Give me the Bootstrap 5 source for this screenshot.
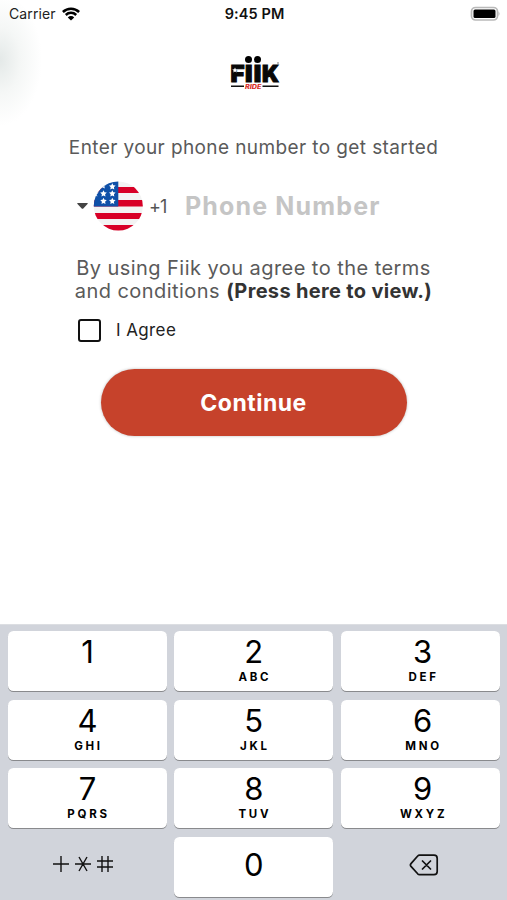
<!DOCTYPE html>
<html lang="en">
<head>
<meta charset="utf-8">
<meta name="viewport" content="width=device-width, initial-scale=1">
<title>Fiik Ride</title>
<link href="https://cdn.jsdelivr.net/npm/bootstrap@5.3.0/dist/css/bootstrap.min.css" rel="stylesheet">
<style>
html, body { height: 100%; }
body { font-family: Inter, "Liberation Sans", sans-serif; background: #fff; color: #000; overflow: hidden; }
.screen { width: 507px; height: 900px; background: radial-gradient(ellipse 42px 66px at 0 60px, #e4e9e8 0, #f5f7f6 50%, #fff 100%); }
.status { height: 27px; padding: 0 7px 0 9px; font-size: 14px; }
.status .side { flex: 1 1 0; }
.carrier { letter-spacing: .1px; color: #222; }
.wifi { margin-left: -2px; }
.clock { font-weight: 600; font-size: 14.5px; letter-spacing: .1px; color: #111; }
.brand { height: 36px; margin-top: 28px; }
.intro { margin-top: 46px; height: 22px; line-height: 22px; font-size: 19px; letter-spacing: .4px; color: #5a5a5a; white-space: nowrap; }
.phone { margin-top: 20.2px; height: 54px; padding-left: 77px; }
.dial { font-size: 18px; letter-spacing: -.8px; color: #555; width: 37px; padding-left: 5px; }
.number { padding: 2px 0 0; border: 0; font-size: 25px; letter-spacing: 1.15px; font-weight: 700; color: #555; width: 220px; background: none; box-shadow: none; }
.number::placeholder { color: #c5c5c5; opacity: 1; }
.terms { margin-top: 23.5px; font-size: 20px; line-height: 23.5px; letter-spacing: .45px; color: #5a5a5a; white-space: nowrap; }
.terms strong { color: #333; letter-spacing: .33px; }
.agree { margin-top: 15px; padding-left: 78px; height: 24px; font-size: 17px; letter-spacing: .4px; color: #222; }
.agree .form-check-input { width: 23px; height: 23px; border: 2.5px solid #111; border-radius: 3px; margin: 0 15px 0 0; }
.go { margin-top: 26.5px; width: 306px; height: 67px; font-size: 23px; letter-spacing: .5px; font-weight: 700; color: #fff; background: #c6422b; border: 0; box-shadow: 0 0 3px #bbb; }
.go.btn { padding: 2px 0 0; }
.keys { height: 276px; background: #d1d4db; padding: 6px 8px 0; display: grid; grid-template-columns: repeat(3, 159px); grid-auto-rows: 60px; gap: 8.5px 7.3px; border-top: 1px solid #dcdee2; }
.key { display: flex; flex-direction: column; align-items: center; justify-content: flex-start; background: #fff; border: 0; border-radius: 5.5px; box-shadow: 0 1px 0 #898a8d; padding: 3px 0 0; }
.key:nth-child(3n) { padding-left: 5px; }
.key b { font-weight: 400; font-size: 31px; line-height: 36px; }
.key i { font-style: normal; font-weight: 700; font-size: 11.5px; line-height: 12px; letter-spacing: 2.7px; padding: 1px 0 0 2px; }
.key.zero { padding-top: 10.5px; }
.bare { display: flex; align-items: center; justify-content: center; }
.symbols { margin: 0 9px 6px 0; }
.erase { margin: 0 0 4px 8px; }
</style>
</head>
<body>
<main class="screen d-flex flex-column">
  <header class="status d-flex align-items-center">
    <div class="side d-flex align-items-center gap-2"><span class="carrier">Carrier</span>
      <svg class="wifi" width="18" height="14" viewBox="0 0 18 14" fill="none" stroke="#000" stroke-width="2.5"><path d="M.9 5a11.5 11.5 0 0 1 16.2 0M3.8 8a7.4 7.4 0 0 1 10.4 0"/><path d="M9 13.6 5.8 10.4a4.6 4.6 0 0 1 6.4 0z" fill="#000" stroke="none"/></svg>
    </div>
    <span class="clock">9:45 PM</span>
    <div class="side d-flex justify-content-end">
      <svg width="30" height="16" viewBox="0 0 30 16"><rect x="1.5" y="1.5" width="26" height="12.5" rx="4" fill="#fff" stroke="#b9b9b9" stroke-width="1.7"/><rect x="3.5" y="3.5" width="22" height="8.5" rx="1.5" fill="#000"/><path d="M28.5 5.5q2 2.2 0 4.5z" fill="#b5b5b5"/></svg>
    </div>
  </header>

  <div class="brand d-flex justify-content-center">
    <svg width="52" height="36" viewBox="0 0 52 36" role="img" aria-label="Fiik Ride">
      <g font-family="Inter, sans-serif" font-weight="900" font-size="23" fill="#080808" stroke="#080808" stroke-width="1">
        <text x="2.5" y="27.2" textLength="14" lengthAdjust="spacingAndGlyphs">F</text><text x="17" y="27.2" textLength="7.5" lengthAdjust="spacingAndGlyphs">I</text><text x="25.7" y="27.2" textLength="7.5" lengthAdjust="spacingAndGlyphs">I</text><text x="34" y="27.2" textLength="17" lengthAdjust="spacingAndGlyphs">K</text>
      </g>
      <circle cx="20.5" cy="4.5" r="3.5"/><circle cx="29.5" cy="4.5" r="3.5"/>
      <path d="m7 12.5.8 1.7 1.9.2-1.4 1.3.4 1.9-1.7-1-1.7 1 .4-1.9-1.4-1.3 1.9-.2z" fill="#fff"/>
      <circle cx="50" cy="8" r=".8" fill="#666"/>
      <path d="M3 31.3h13M34.5 31.3h16" stroke="#111" stroke-width="1.5"/>
      <text x="17" y="33.6" font-family="Inter, sans-serif" font-size="6" font-weight="800" font-style="italic" fill="#d92b25" textLength="16.5" lengthAdjust="spacingAndGlyphs">RIDE</text>
    </svg>
  </div>

  <p class="intro text-center mb-0">Enter your phone number to get started</p>

  <div class="phone d-flex align-items-center">
    <svg width="11" height="6" viewBox="0 0 11 6"><path d="M1 0h9q1.5 0 .5 1L6.3 5.5q-.8.7-1.6 0L.5 1Q-.5 0 1 0z" fill="#444"/></svg>
    <svg class="ms-1" width="52" height="52" viewBox="0 0 52 52">
      <clipPath id="round"><circle cx="26.3" cy="26" r="24.5"/></clipPath>
      <g clip-path="url(#round)"><path fill="#f3f3f3" d="M0 0h52v52H0z"/>
      <path fill="#d80027" d="M0 7h52v6H0zM0 20h52v6.5H0zM0 33h52v6H0zM0 45h52v6H0z"/><path fill="#0f50a8" d="M0 0h26.3v26.5H0z"/>
      <g fill="#fff"><path id="star" d="m20.3 3.200 1 2.100 2.300.3-1.700 1.600.4 2.300-2-1.100-2 1.100.4-2.300L17 5.600l2.300-.3z"/><use href="#star" y="7"/><use href="#star" y="14.5"/><use href="#star" x="-8.8" y="7"/><use href="#star" x="-8.8" y="14.5"/><use href="#star" x="-9.5" y="-1"/><use href="#star" x="-17" y="7"/></g></g>
    </svg>
    <span class="dial">+1</span>
    <input class="number form-control ms-1" type="tel" placeholder="Phone Number" aria-label="Phone Number">
  </div>

  <p class="terms text-center mb-0">By using Fiik you agree to the terms<br>and conditions <strong>(Press here to view.)</strong></p>

  <label class="agree d-flex align-items-center"><input class="form-check-input" type="checkbox"><span>I Agree</span></label>

  <button class="go btn rounded-pill align-self-center" type="button">Continue</button>

  <section class="keys mt-auto" aria-label="Keypad">
    <button class="key"><b>1</b></button><button class="key"><b>2</b><i>ABC</i></button><button class="key"><b>3</b><i>DEF</i></button>
    <button class="key"><b>4</b><i>GHI</i></button><button class="key"><b>5</b><i>JKL</i></button><button class="key"><b>6</b><i>MNO</i></button>
    <button class="key"><b>7</b><i>PQRS</i></button><button class="key"><b>8</b><i>TUV</i></button><button class="key"><b>9</b><i>WXYZ</i></button>
    <div class="bare"><svg class="symbols" width="62" height="18" viewBox="0 0 62 18" fill="none" stroke="#111" stroke-width="1.4"><path d="M1 9h16M9 1v16M23 9h16M27 2l8 14M35 2l-8 14M45 6h16M45 12h16M50 1v16M56 1v16"/></svg></div>
    <button class="key zero"><b>0</b></button>
    <div class="bare"><svg class="erase" width="30" height="22" viewBox="0 0 30 22" fill="none" stroke="#111" stroke-width="1.7" stroke-linejoin="round" stroke-linecap="round"><path d="M10.500 1.200H25a3.200 3.200 0 0 1 3.200 3.200v13a3.200 3.200 0 0 1-3.200 3.200H10.500q-1 0-1.800-.8L2 12.400q-1.200-1.400 0-2.800L8.700 2q.8-.8 1.800-.8zM13.500 7l8 8M21.500 7l-8 8"/></svg></div>
  </section>
</main>
<script src="https://cdn.jsdelivr.net/npm/bootstrap@5.3.0/dist/js/bootstrap.bundle.min.js"></script>
</body>
</html>
